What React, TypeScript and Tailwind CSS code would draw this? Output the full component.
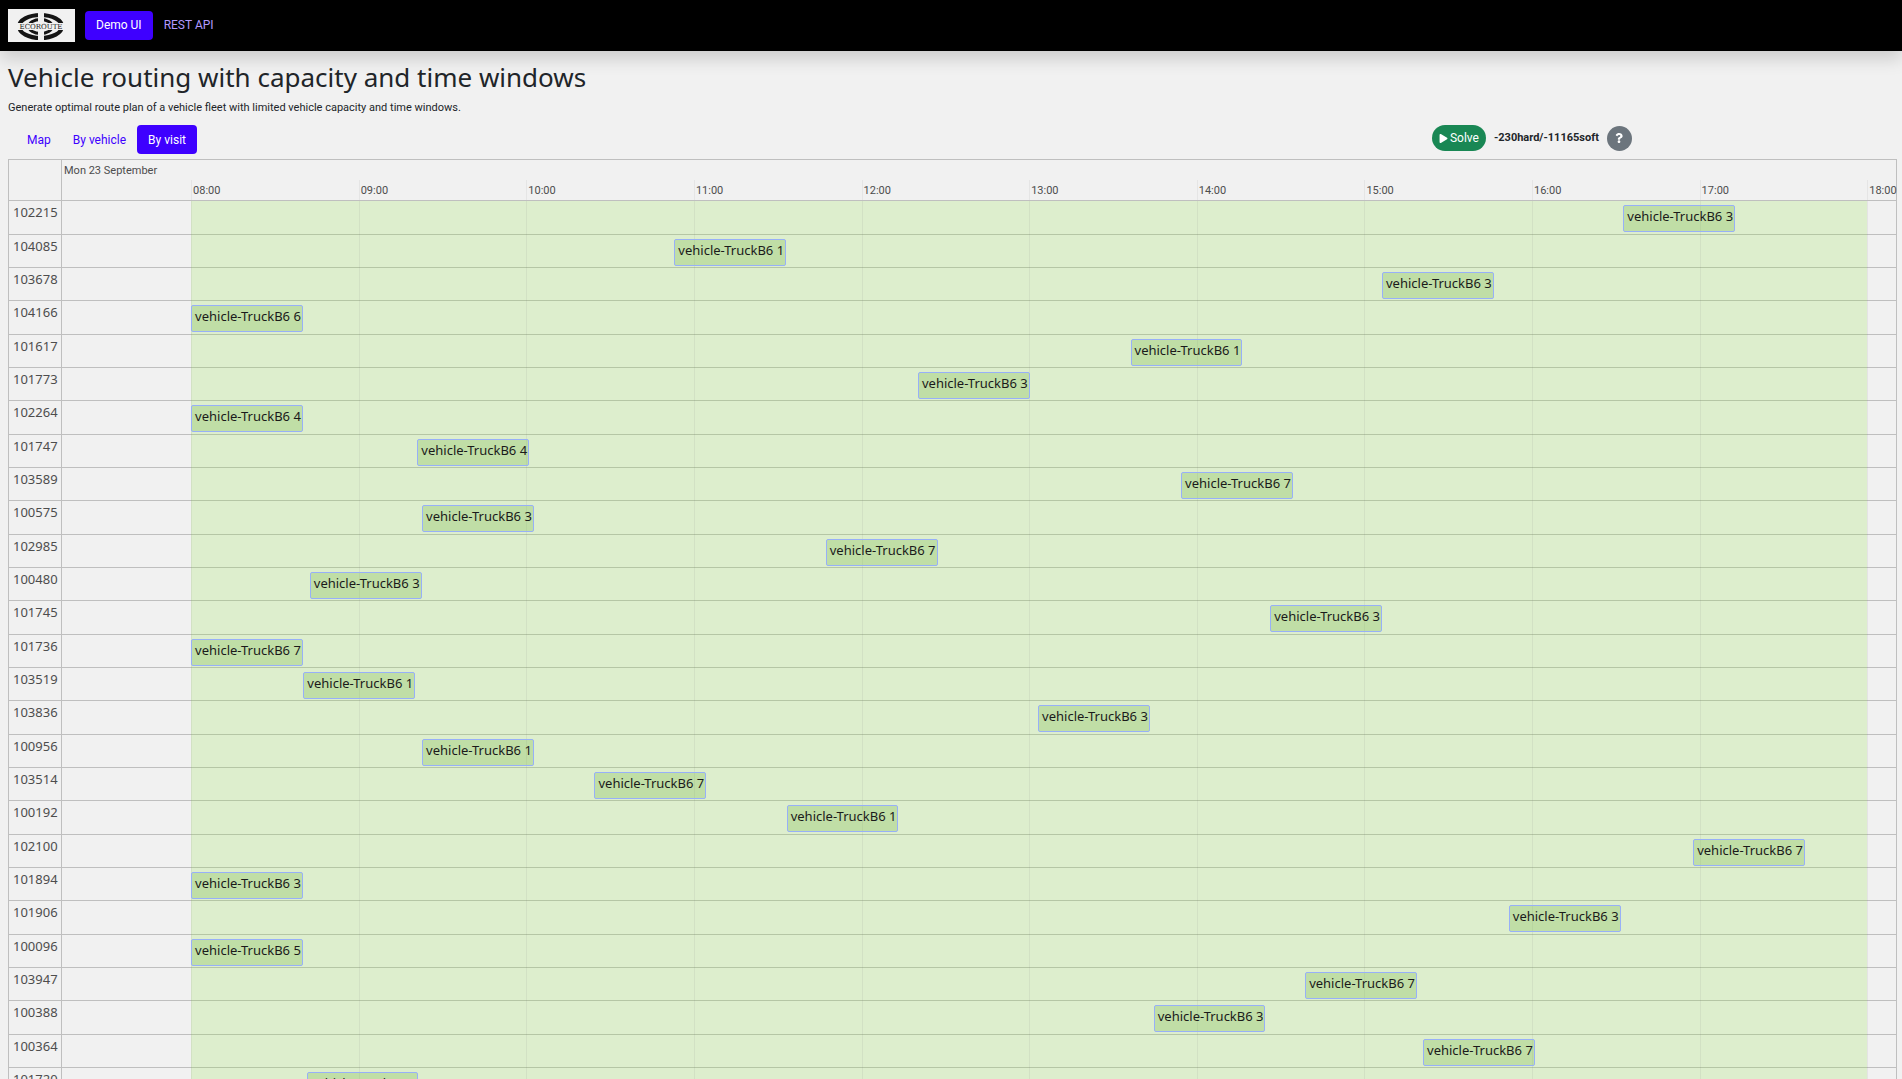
import { FaPlay, FaQuestion } from "react-icons/fa";

type Visit = { id: string; vehicle: number; start: number };

// Start is in minutes after 08:00.
const visits: Visit[] = [
  { id: "102215", vehicle: 3, start: 512.7 },
  { id: "104085", vehicle: 1, start: 173 },
  { id: "103678", vehicle: 3, start: 426.3 },
  { id: "104166", vehicle: 6, start: 0 },
  { id: "101617", vehicle: 1, start: 336.3 },
  { id: "101773", vehicle: 3, start: 260.2 },
  { id: "102264", vehicle: 4, start: 0 },
  { id: "101747", vehicle: 4, start: 81 },
  { id: "103589", vehicle: 7, start: 354.4 },
  { id: "100575", vehicle: 3, start: 82.7 },
  { id: "102985", vehicle: 7, start: 227.2 },
  { id: "100480", vehicle: 3, start: 42.5 },
  { id: "101745", vehicle: 3, start: 386.3 },
  { id: "101736", vehicle: 7, start: 0 },
  { id: "103519", vehicle: 1, start: 40.2 },
  { id: "103836", vehicle: 3, start: 303.2 },
  { id: "100956", vehicle: 1, start: 82.7 },
  { id: "103514", vehicle: 7, start: 144.4 },
  { id: "100192", vehicle: 1, start: 213.2 },
  { id: "102100", vehicle: 7, start: 537.7 },
  { id: "101894", vehicle: 3, start: 0 },
  { id: "101906", vehicle: 3, start: 471.7 },
  { id: "100096", vehicle: 5, start: 0 },
  { id: "103947", vehicle: 7, start: 398.8 },
  { id: "100388", vehicle: 3, start: 344.6 },
  { id: "100364", vehicle: 7, start: 441 },
  { id: "101720", vehicle: 4, start: 41.4 },
];

const hours = [8, 9, 10, 11, 12, 13, 14, 15, 16, 17, 18];
const SERVICE_MINUTES = 40;
const LEAD_MINUTES = 46.2;
const SPAN_MINUTES = 656.5;

const at = (minutes: number) => `${((LEAD_MINUTES + minutes) / SPAN_MINUTES) * 100}%`;
const span = (minutes: number) => `${(minutes / SPAN_MINUTES) * 100}%`;

function Logo() {
  return (
    <svg width="67" height="33" viewBox="0 0 67 33" role="img" aria-label="Ecoroute">
      <rect width="67" height="33" fill="#f1f1f1" />
      <ellipse cx="32.5" cy="17.5" rx="21.5" ry="11.5" fill="none" stroke="#151515" strokeWidth="4" />
      <ellipse cx="32.5" cy="17.5" rx="11.5" ry="7" fill="none" stroke="#151515" strokeWidth="3" />
      <rect x="30" y="3" width="6" height="29" fill="#f1f1f1" />
      <rect x="7" y="14" width="51" height="7" fill="#f1f1f1" />
      <text
        x="33"
        y="20"
        textAnchor="middle"
        fontFamily="DejaVu Serif, serif"
        fontSize="7"
        fill="#222"
      >
        ECOROUTE
      </text>
    </svg>
  );
}

function Navbar() {
  return (
    <nav className="flex h-[51px] shrink-0 items-center bg-black px-2 text-xs shadow-[0_8px_16px_rgba(0,0,0,0.15)]">
      <a href="#home" className="mr-2.5">
        <Logo />
      </a>
      <a href="#demo" className="flex h-[29px] items-center rounded bg-[#3e00ff] px-[11px] pb-0.5 text-white">
        Demo UI
      </a>
      <a href="#rest" className="flex h-[29px] items-center px-[11px] pb-0.5 text-[#b299ff]">
        REST API
      </a>
    </nav>
  );
}

function Toolbar() {
  return (
    <div className="mt-2 flex items-start text-xs">
      <div role="tablist" className="flex flex-1 pl-2 text-[#3e00ff]">
        <button role="tab" aria-selected="false" className="h-[29px] px-[11px]">
          Map
        </button>
        <button role="tab" aria-selected="false" className="h-[29px] px-[11px]">
          By vehicle
        </button>
        <button role="tab" aria-selected="true" className="h-[29px] rounded bg-[#3e00ff] px-[11px] text-white">
          By visit
        </button>
      </div>
      <div className="flex w-[24.5%] items-center gap-2">
        <button className="flex h-[26px] items-center gap-0.5 rounded-full bg-[#198754] px-[7px] text-white">
          <FaPlay size={9} aria-hidden="true" />
          Solve
        </button>
        <span className="text-[11px] font-bold text-[#212529]">-230hard/-11165soft</span>
        <button
          aria-label="Score analysis"
          className="flex size-[25px] items-center justify-center rounded-full bg-[#6c757d] text-white"
        >
          <FaQuestion size={10} aria-hidden="true" />
        </button>
      </div>
    </div>
  );
}

function VisitRow({ visit }: { visit: Visit }) {
  return (
    <li className="flex h-[33px] border-b border-[#bfbfbf] text-[13px] leading-4 nth-[3n+1]:h-[34px]">
      <div className="w-[53px] shrink-0 border-r border-[#bfbfbf] pt-[3px] pl-1 text-[#4d4d4d]">{visit.id}</div>
      <div className="relative flex-1">
        <div
          className="absolute top-1 z-20 h-[27px] rounded-xs border border-[#97b0f8] bg-[rgba(130,191,84,0.32)] pt-0.5 pl-[3px] whitespace-nowrap text-[#1a1a1a]"
          style={{ left: at(visit.start), width: span(SERVICE_MINUTES) }}
        >
          {`vehicle-TruckB6 ${visit.vehicle}`}
        </div>
      </div>
    </li>
  );
}

function Timeline() {
  return (
    <section className="relative mt-[5px] mr-[-3px] border border-[#bfbfbf]" aria-label="Visits by time">
      <header className="flex h-[41px] border-b border-[#bfbfbf] font-[Roboto,sans-serif] text-[11px] text-[#4d4d4d]">
        <div className="w-[53px] shrink-0 border-r border-[#bfbfbf]" />
        <div className="flex-1">
          <div className="h-5 pl-0.5 leading-[22px]">Mon 23 September</div>
          <div className="relative h-5">
            {hours.map((hour) => (
              <span
                key={hour}
                className="absolute top-0 h-5 border-l border-[#e5e5e5] pl-px leading-[22px]"
                style={{ left: at((hour - 8) * 60) }}
              >
                {`${String(hour).padStart(2, "0")}:00`}
              </span>
            ))}
          </div>
        </div>
      </header>
      <ul className="font-['Noto_Sans',sans-serif]">
        {visits.map((visit) => (
          <VisitRow key={visit.id} visit={visit} />
        ))}
      </ul>
      <div className="pointer-events-none absolute top-[41px] right-0 bottom-0 left-[53px]">
        <div className="absolute inset-y-0 bg-[#8ae23430]" style={{ left: at(0), width: span(600) }} />
        {hours.map((hour) => (
          <div
            key={hour}
            className="absolute inset-y-0 w-px bg-[rgba(120,120,120,0.1)]"
            style={{ left: at((hour - 8) * 60) }}
          />
        ))}
      </div>
    </section>
  );
}

export default function App() {
  return (
    <div className="flex h-screen flex-col overflow-hidden bg-[#f1f1f1] font-[Roboto,sans-serif] text-[#212529]">
      <Navbar />
      <main className="px-2">
        <h1 className="mt-2 font-['Noto_Sans',sans-serif] text-[26px] leading-9">
          Vehicle routing with capacity and time windows
        </h1>
        <p className="mt-1 text-[11px] leading-[18px]">
          Generate optimal route plan of a vehicle fleet with limited vehicle capacity and time windows.
        </p>
        <Toolbar />
        <Timeline />
      </main>
    </div>
  );
}
